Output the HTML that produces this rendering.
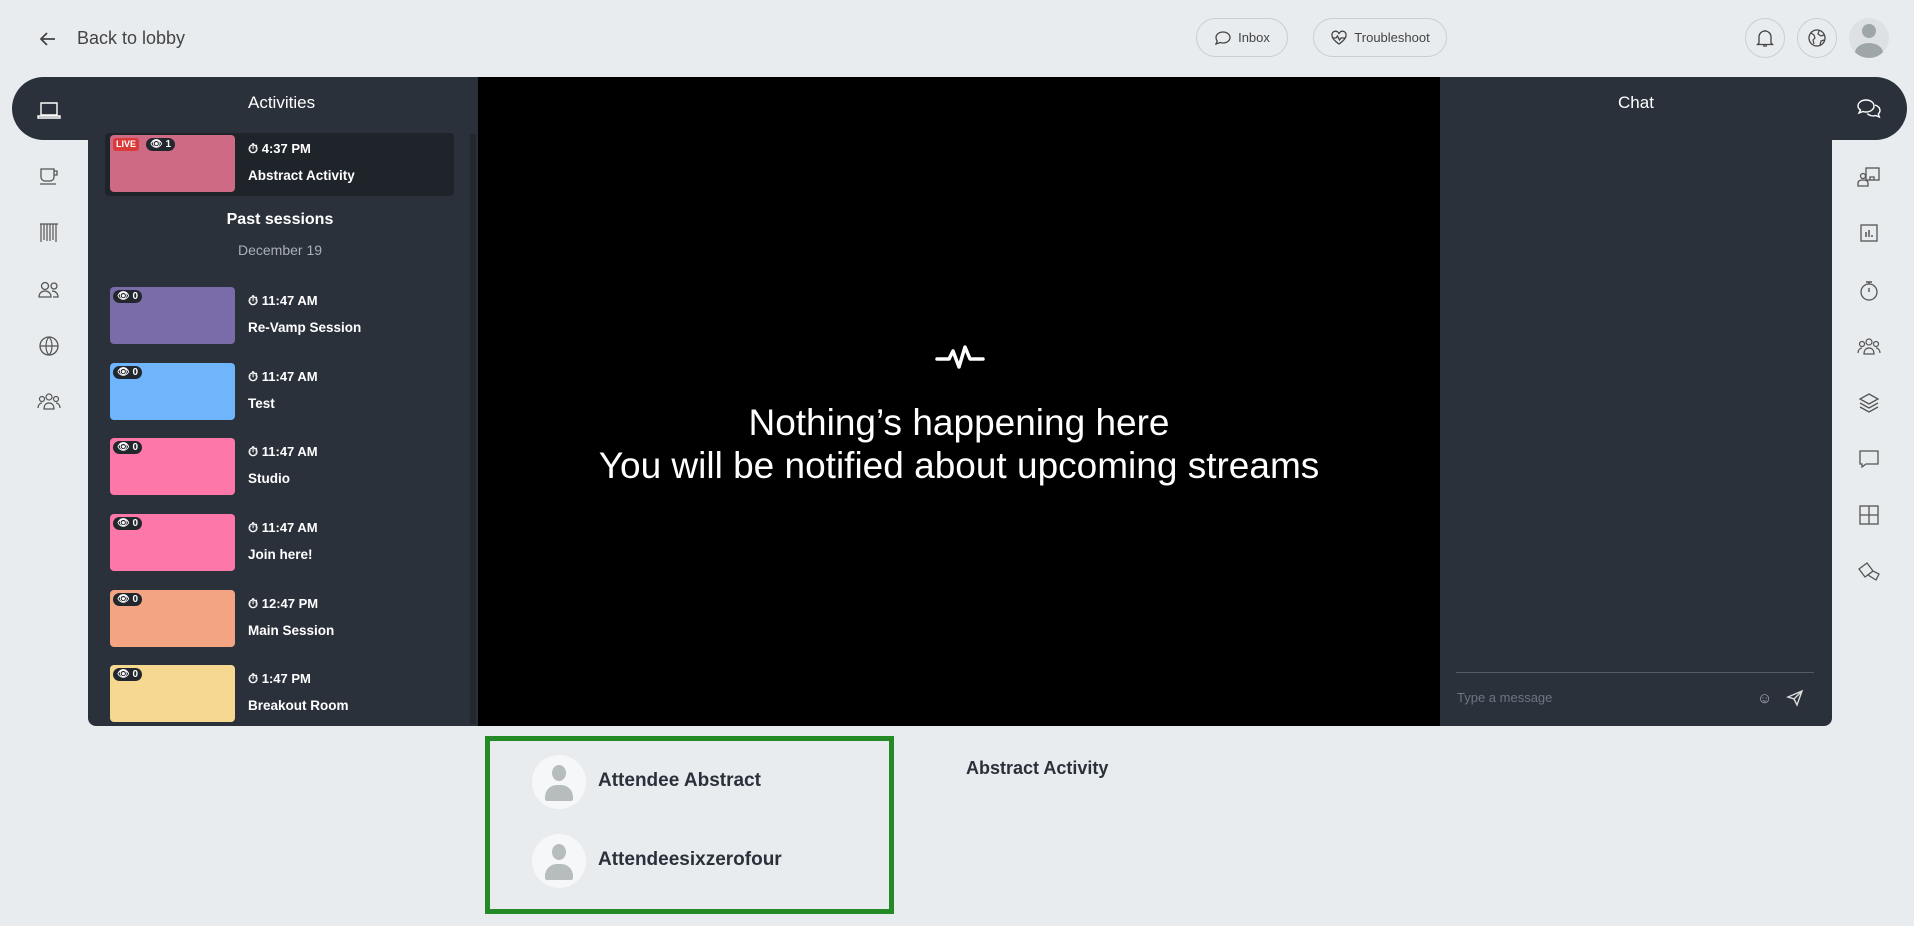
<!DOCTYPE html>
<html><head><meta charset="utf-8"><style>
*{box-sizing:border-box;margin:0;padding:0}
body{width:1914px;height:926px;background:#e8ecee;font-family:"Liberation Sans",sans-serif;position:relative;overflow:hidden;color:#2b313b}
.abs{position:absolute}
.btn{position:absolute;border:1px solid #c9ced6;border-radius:20px;height:39px;top:18px;font-size:13px;color:#444;display:flex;align-items:center;justify-content:center;gap:6px}
.circ{position:absolute;top:18px;width:40px;height:40px;border-radius:50%;border:1px solid #c9ced6;display:flex;align-items:center;justify-content:center}
.dark{background:#2b313b}
.item{position:absolute;left:110px;width:350px;height:58px}
.thumb{position:absolute;left:0;top:0;width:125px;height:57px;border-radius:4px}
.eye{position:absolute;left:3px;top:3px;background:#22262d;border-radius:8px;height:13px;padding:0 4px;color:#fff;font-size:10px;font-weight:bold;line-height:13px}
.time{position:absolute;left:138px;top:6px;color:#fff;font-size:13px;font-weight:bold}
.title{position:absolute;left:138px;top:33px;color:#fff;font-size:13.5px;font-weight:bold}
.ic{position:absolute;width:26px;height:26px}
</style></head><body>
<svg class="abs" style="left:38px;top:29px" width="20" height="20" viewBox="0 0 20 20"><path d="M17 10H3M9 4L3 10l6 6" stroke="#444" stroke-width="1.8" fill="none"/></svg>
<div class="abs" style="left:77px;top:28px;font-size:18px;color:#444">Back to lobby</div>
<div class="btn" style="left:1196px;width:92px"><svg width="18" height="16" viewBox="0 0 18 16"><path d="M9 2c4 0 7 2.5 7 5.5S13 13 9 13c-1 0-2-.2-3-.5L2 14l1.2-3C2.4 10 2 8.8 2 7.5 2 4.5 5 2 9 2z" stroke="#444" stroke-width="1.3" fill="none"/></svg>Inbox</div>
<div class="btn" style="left:1313px;width:134px"><svg width="18" height="16" viewBox="0 0 18 16"><path d="M9 14S2 9.5 2 5.5A3.3 3.3 0 0 1 9 4a3.3 3.3 0 0 1 7 1.5C16 9.5 9 14 9 14zM3 8h3l1.5-2 2 4 1.5-2h4" stroke="#444" stroke-width="1.3" fill="none"/></svg>Troubleshoot</div>
<div class="circ" style="left:1745px"><svg width="18" height="20" viewBox="0 0 18 20"><path d="M3 15V9a6 6 0 0 1 12 0v6l1.5 1.5h-15zM7 18h4M9 2v1" stroke="#444" stroke-width="1.3" fill="none"/></svg></div>
<div class="circ" style="left:1797px"><svg width="20" height="20" viewBox="0 0 20 20"><circle cx="10" cy="10" r="8" stroke="#444" stroke-width="1.3" fill="none"/><path d="M4 5l3 2 1 3-2 2 1 4M12 3l-1 3 3 2 3-1M13 17l1-4 3-1" stroke="#444" stroke-width="1.2" fill="none"/></svg></div>
<div class="abs" style="left:1849px;top:18px;width:40px;height:40px;border-radius:50%;background:#dde1e3;overflow:hidden"><div class="abs" style="left:13px;top:6px;width:14px;height:14px;border-radius:50%;background:#9ea6a8"></div><div class="abs" style="left:6px;top:25px;width:28px;height:20px;border-radius:50% 50% 0 0;background:#9ea6a8"></div></div>

<div class="abs dark" style="left:12px;top:77px;width:200px;height:63px;border-radius:32px 0 0 32px"></div>
<div class="abs dark" style="left:88px;top:77px;width:390px;height:649px;border-radius:0 0 0 8px"></div>
<div class="abs" style="left:478px;top:77px;width:962px;height:649px;background:#000"></div>
<div class="abs dark" style="left:1440px;top:77px;width:392px;height:649px;border-radius:0 0 8px 0"></div>
<div class="abs dark" style="left:1800px;top:77px;width:107px;height:63px;border-radius:0 32px 32px 0"></div>
<div class="abs" style="left:88px;top:140px;width:20px;height:20px;background:radial-gradient(circle at 100% 100%,transparent 19px,#2b313b 20px)"></div>
<div class="abs" style="left:1812px;top:140px;width:20px;height:20px;background:radial-gradient(circle at 0 100%,transparent 19px,#2b313b 20px)"></div>
<div class="abs" style="left:12px;top:140px;width:76px;height:20px;background:#e8ecee;border-radius:0 20px 0 0"></div>
<div class="abs" style="left:1832px;top:140px;width:80px;height:20px;background:#e8ecee;border-radius:20px 0 0 0"></div>

<svg class="ic" style="left:36px;top:97px" viewBox="0 0 26 26"><path d="M5 6h16v12H5zM2 19h22v2H2z" stroke="#fff" stroke-width="1.4" fill="none"/></svg>
<svg class="ic" style="left:36px;top:163px" viewBox="0 0 26 26"><path d="M5 6h13v8a4 4 0 0 1-4 4H9a4 4 0 0 1-4-4zM18 8h3v4h-3M4 21h16" stroke="#555" stroke-width="1.3" fill="none"/></svg>
<svg class="ic" style="left:36px;top:220px" viewBox="0 0 26 26"><path d="M4 4h18M5 4v18M8 4v16M11 4v17M14 4v17M17 4v16M20 4v18" stroke="#555" stroke-width="1.2" fill="none"/></svg>
<svg class="ic" style="left:36px;top:277px" viewBox="0 0 26 26"><circle cx="9" cy="9" r="3.5" stroke="#555" stroke-width="1.3" fill="none"/><circle cx="18" cy="9" r="3" stroke="#555" stroke-width="1.3" fill="none"/><path d="M3 20c0-4 3-6 6-6s6 2 6 6zM16 14c3 0 6 2 6 6h-5" stroke="#555" stroke-width="1.3" fill="none"/></svg>
<svg class="ic" style="left:36px;top:333px" viewBox="0 0 26 26"><circle cx="13" cy="13" r="9" stroke="#555" stroke-width="1.3" fill="none"/><path d="M4 13h18M13 4c-4 4-4 14 0 18M13 4c4 4 4 14 0 18" stroke="#555" stroke-width="1.2" fill="none"/></svg>
<svg class="ic" style="left:36px;top:389px" viewBox="0 0 26 26"><circle cx="13" cy="8" r="3" stroke="#555" stroke-width="1.2" fill="none"/><circle cx="6" cy="10" r="2.5" stroke="#555" stroke-width="1.2" fill="none"/><circle cx="20" cy="10" r="2.5" stroke="#555" stroke-width="1.2" fill="none"/><path d="M8 20c0-4 2-6 5-6s5 2 5 6zM2 19c0-3 2-5 4-5M24 19c0-3-2-5-4-5" stroke="#555" stroke-width="1.2" fill="none"/></svg>

<div class="abs" style="left:248px;top:93px;color:#fff;font-size:17px">Activities</div>
<div class="abs" style="left:470px;top:134px;width:6px;height:590px;background:#23282f"></div>
<div class="abs" style="left:105px;top:133px;width:349px;height:63px;background:#1f232a;border-radius:4px"></div>
<div class="item" style="top:135px"><div class="thumb" style="background:#cf6a85"></div><div class="abs" style="left:3px;top:3px;background:#d93a3a;color:#fff;font-size:9px;font-weight:bold;padding:0 3px;border-radius:3px;height:13px;line-height:13px">LIVE</div><div class="eye" style="left:36px">👁 1</div><div class="time">⏱ 4:37 PM</div><div class="title">Abstract Activity</div></div>
<div class="abs" style="left:88px;width:384px;top:211px;text-align:center;color:#fff;font-size:16px;font-weight:bold">Past sessions</div>
<div class="abs" style="left:88px;width:384px;top:242px;text-align:center;color:#aab0b8;font-size:14px">December 19</div>
<div class="item" style="top:287px"><div class="thumb" style="background:#7a6ca8"></div><div class="eye">👁 0</div><div class="time">⏱ 11:47 AM</div><div class="title">Re-Vamp Session</div></div>
<div class="item" style="top:363px"><div class="thumb" style="background:#6eb5fc"></div><div class="eye">👁 0</div><div class="time">⏱ 11:47 AM</div><div class="title">Test</div></div>
<div class="item" style="top:438px"><div class="thumb" style="background:#fd78a8"></div><div class="eye">👁 0</div><div class="time">⏱ 11:47 AM</div><div class="title">Studio</div></div>
<div class="item" style="top:514px"><div class="thumb" style="background:#fd78a8"></div><div class="eye">👁 0</div><div class="time">⏱ 11:47 AM</div><div class="title">Join here!</div></div>
<div class="item" style="top:590px"><div class="thumb" style="background:#f2a483"></div><div class="eye">👁 0</div><div class="time">⏱ 12:47 PM</div><div class="title">Main Session</div></div>
<div class="item" style="top:665px;height:58px;overflow:hidden"><div class="thumb" style="background:#f6d890"></div><div class="eye">👁 0</div><div class="time">⏱ 1:47 PM</div><div class="title">Breakout Room</div></div>

<svg class="abs" style="left:935px;top:343px" width="50" height="30" viewBox="0 0 50 30"><path d="M2 16h12l4-8 6 16 6-20 5 12h13" stroke="#fff" stroke-width="3.5" fill="none" stroke-linejoin="round" stroke-linecap="round"/></svg>
<div class="abs" style="left:478px;width:962px;top:401px;text-align:center;color:#fff;font-size:37px;line-height:43px">Nothing’s happening here<br>You will be notified about upcoming streams</div>

<div class="abs" style="left:1440px;width:392px;top:93px;text-align:center;color:#fff;font-size:17px">Chat</div>
<div class="abs" style="left:1456px;top:672px;width:358px;height:1px;background:#555c66"></div>
<div class="abs" style="left:1457px;top:690px;color:#6d7580;font-size:13px">Type a message</div>
<div class="abs" style="left:1757px;top:690px;color:#aab;font-size:15px">☺</div>
<svg class="abs" style="left:1786px;top:689px" width="18" height="18" viewBox="0 0 18 18"><path d="M2 8L16 2 11 16 8 10zM8 10l8-8" stroke="#ddd" stroke-width="1.4" fill="none"/></svg>

<svg class="ic" style="left:1856px;top:96px" viewBox="0 0 26 26"><path d="M10 4c5 0 8 3 8 6s-3 6-8 6c-1 0-2 0-3-.5L3 17l1.5-3C3 13 2 11.5 2 10c0-3 3-6 8-6zM19 9c3 1 5 3 5 5.5 0 1.5-.7 2.5-1.7 3.5l1 3-3.5-1.5c-3 1-7 0-8.5-2" stroke="#fff" stroke-width="1.4" fill="none"/></svg>
<svg class="ic" style="left:1856px;top:164px" viewBox="0 0 26 26"><rect x="10" y="4" width="13" height="12" stroke="#555" stroke-width="1.3" fill="none"/><circle cx="7" cy="12" r="2.5" stroke="#555" stroke-width="1.3" fill="none"/><path d="M2 22v-3c0-2 2-3 5-3s5 1 5 3v3zM14 16v-3h4v3" stroke="#555" stroke-width="1.3" fill="none"/></svg>
<svg class="ic" style="left:1856px;top:220px" viewBox="0 0 26 26"><rect x="5" y="5" width="16" height="16" stroke="#555" stroke-width="1.3" fill="none"/><path d="M10 17v-5M13 17v-7M16 17v-2" stroke="#555" stroke-width="1.5"/></svg>
<svg class="ic" style="left:1856px;top:278px" viewBox="0 0 26 26"><circle cx="13" cy="14" r="8" stroke="#555" stroke-width="1.3" fill="none"/><path d="M10 4h6M13 4v2M13 14V10" stroke="#555" stroke-width="1.4"/></svg>
<svg class="ic" style="left:1856px;top:334px" viewBox="0 0 26 26"><circle cx="13" cy="8" r="3" stroke="#555" stroke-width="1.2" fill="none"/><circle cx="6" cy="10" r="2.5" stroke="#555" stroke-width="1.2" fill="none"/><circle cx="20" cy="10" r="2.5" stroke="#555" stroke-width="1.2" fill="none"/><path d="M8 20c0-4 2-6 5-6s5 2 5 6zM2 19c0-3 2-5 4-5M24 19c0-3-2-5-4-5" stroke="#555" stroke-width="1.2" fill="none"/></svg>
<svg class="ic" style="left:1856px;top:390px" viewBox="0 0 26 26"><path d="M13 4l9 5-9 5-9-5zM4 13l9 5 9-5M4 17l9 5 9-5" stroke="#555" stroke-width="1.3" fill="none"/></svg>
<svg class="ic" style="left:1856px;top:446px" viewBox="0 0 26 26"><path d="M4 5h18v13H10l-4 3v-3H4z" stroke="#555" stroke-width="1.3" fill="none"/></svg>
<svg class="ic" style="left:1856px;top:502px" viewBox="0 0 26 26"><rect x="4" y="4" width="18" height="18" stroke="#555" stroke-width="1.3" fill="none"/><path d="M4 13h18M13 4v18" stroke="#555" stroke-width="1.3"/></svg>
<svg class="ic" style="left:1856px;top:558px" viewBox="0 0 26 26"><path d="M3 11l8-6 6 8-8 6zM12 17l5-4 6 3-3 6z" stroke="#555" stroke-width="1.3" fill="none"/></svg>

<div class="abs" style="left:485px;top:736px;width:409px;height:178px;border:5px solid #238a25"></div>
<div class="abs" style="left:532px;top:755px;width:54px;height:54px;border-radius:50%;background:#f6f7f9;overflow:hidden"><div class="abs" style="left:20px;top:10px;width:14px;height:16px;border-radius:50%;background:#b7bcbd"></div><div class="abs" style="left:13px;top:30px;width:28px;height:16px;border-radius:12px 12px 2px 2px;background:#b7bcbd"></div></div>
<div class="abs" style="left:598px;top:770px;font-size:19px;font-weight:bold;color:#2b313b">Attendee Abstract</div>
<div class="abs" style="left:532px;top:834px;width:54px;height:54px;border-radius:50%;background:#f6f7f9;overflow:hidden"><div class="abs" style="left:20px;top:10px;width:14px;height:16px;border-radius:50%;background:#b7bcbd"></div><div class="abs" style="left:13px;top:30px;width:28px;height:16px;border-radius:12px 12px 2px 2px;background:#b7bcbd"></div></div>
<div class="abs" style="left:598px;top:849px;font-size:19px;font-weight:bold;color:#2b313b">Attendeesixzerofour</div>
<div class="abs" style="left:966px;top:758px;font-size:18px;font-weight:bold;color:#2b313b">Abstract Activity</div>
</body></html>
